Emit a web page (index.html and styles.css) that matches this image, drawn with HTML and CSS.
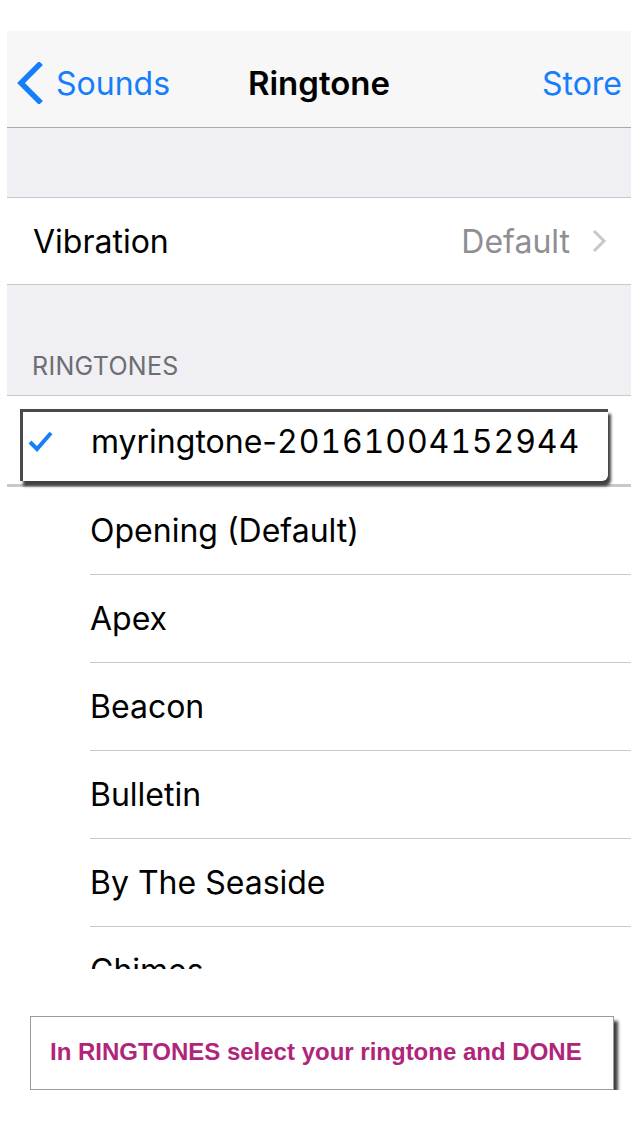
FILE: index.html
```html
<!DOCTYPE html>
<html>
<head>
<meta charset="utf-8">
<link rel="stylesheet" href="styles.css">
</head>
<body>
<div class="screen">
  <div class="navbar">
    <div class="nav-back">
      <svg class="back-chev" width="28" height="42" viewBox="0 0 28 42"><path d="M24 3 L6 21 L24 39" fill="none" stroke="#157efb" stroke-width="5.5" stroke-linecap="square"/></svg>
      <span>Sounds</span>
    </div>
    <div class="nav-title">Ringtone</div>
    <div class="nav-right">Store</div>
  </div>
  <div class="group-gap"></div>
  <div class="cell vib">
    <span class="cell-label">Vibration</span>
    <span class="cell-value">Default
      <svg class="disc" width="16" height="26" viewBox="0 0 16 26"><path d="M3 3 L13 13 L3 23" fill="none" stroke="#c7c7cc" stroke-width="3"/></svg>
    </span>
  </div>
  <div class="section-header">RINGTONES</div>
  <div class="list">
    <div class="row selected">
      <div class="highlight">
        <svg class="check" width="26" height="22" viewBox="0 0 26 22"><path d="M2 12 L9 19 L23 3" fill="none" stroke="#157efb" stroke-width="4"/></svg>
        <span>myringtone-<span class="digits">20161004152944</span></span>
      </div>
    </div>
    <div class="row">Opening (Default)</div>
    <div class="row">Apex</div>
    <div class="row">Beacon</div>
    <div class="row">Bulletin</div>
    <div class="row">By The Seaside</div>
    <div class="row">Chimes</div>
  </div>
  <div class="footer">
    <div class="note">In RINGTONES select your ringtone and DONE</div>
  </div>
</div>
</body>
</html>
```

FILE: styles.css
```css
html, body {
  margin: 0;
  padding: 0;
  background: #ffffff;
}
.screen {
  margin-left: 7px;
  width: 624px;
  padding-top: 31px;
  font-family: Inter, Roboto, "Noto Sans", sans-serif;
  color: #000;
}
.navbar {
  height: 88px;
  padding-top: 8px;
  background: #f7f7f8;
  border-bottom: 1px solid #a9a9ad;
  display: flex;
  align-items: center;
  position: relative;
  font-size: 32px;
}
.nav-back {
  display: flex;
  align-items: center;
  color: #157efb;
  padding-left: 8px;
  gap: 13px;
}
.back-chev {
  display: block;
}
.nav-title {
  position: absolute;
  left: 0;
  right: 0;
  top: 8px;
  bottom: 0;
  display: flex;
  align-items: center;
  justify-content: center;
  font-weight: 600;
  font-size: 33px;
  pointer-events: none;
}
.nav-right {
  margin-left: auto;
  color: #157efb;
  padding-right: 9px;
}
.group-gap {
  height: 69px;
  background: #efeff4;
  border-bottom: 1px solid #c8c7cc;
}
.cell {
  height: 86px;
  background: #fff;
  border-bottom: 1px solid #c8c7cc;
  display: flex;
  align-items: center;
  padding: 0 24px 0 26px;
  font-size: 32px;
}
.cell-value {
  margin-left: auto;
  color: #8e8e93;
  display: flex;
  align-items: center;
  gap: 21px;
}
.section-header {
  height: 111px;
  background: #efeff4;
  border-bottom: 1px solid #c8c7cc;
  box-sizing: border-box;
  padding: 0 0 14px 25px;
  display: flex;
  align-items: flex-end;
  font-size: 25px;
  color: #6d6d72;
  letter-spacing: 0.3px;
}
.list {
  height: 573px;
  overflow: hidden;
}
.row {
  height: 87px;
  margin-left: 83px;
  border-bottom: 1px solid #c8c7cc;
  display: flex;
  align-items: center;
  font-size: 32px;
}
.row.selected {
  margin-left: 0;
  height: 88px;
  border-bottom: 3px solid #c8c7cc;
  position: relative;
}
.highlight {
  position: absolute;
  left: 13px;
  top: 13px;
  width: 588px;
  height: 72px;
  box-sizing: border-box;
  padding-bottom: 11px;
  background: #fff;
  border-top: 3px solid #4a4a4a;
  border-left: 3px solid #4a4a4a;
  border-bottom-right-radius: 6px;
  box-shadow: 3px 5px 3px rgba(0, 0, 0, 0.75);
  display: flex;
  align-items: center;
  font-size: 32px;
}
.digits {
  font-variant-numeric: tabular-nums;
  letter-spacing: 0.9px;
}
.check {
  margin-left: 5px;
  margin-right: 37px;
}
.footer {
  padding: 47px 0 0 23px;
}
.note {
  width: 584px;
  height: 74px;
  box-sizing: border-box;
  border: 1px solid #9a9a9a;
  background: #fff;
  box-shadow: 4px 5px 3px rgba(0, 0, 0, 0.75);
  display: flex;
  align-items: center;
  padding-left: 19px;
  padding-bottom: 2px;
  font-family: "Liberation Sans", Arial, sans-serif;
  font-weight: bold;
  font-size: 24px;
  color: #b0257a;
}
```
